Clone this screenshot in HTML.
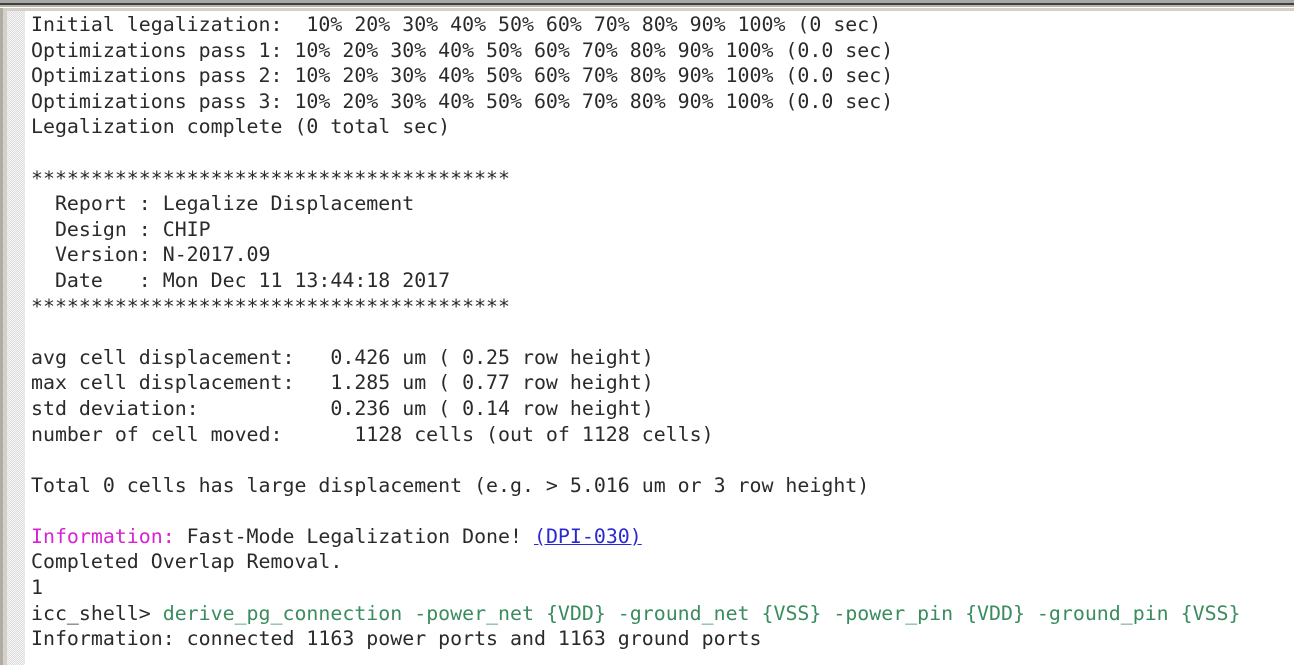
<!DOCTYPE html>
<html><head><meta charset="utf-8"><style>
html,body{margin:0;padding:0;width:1294px;height:665px;overflow:hidden;background:#fff;}
.top{position:absolute;left:0;top:0;width:1294px;height:3px;background:#a8a8a4;}
.top2{position:absolute;left:0;top:3px;width:1294px;height:2px;background:#404040;}
.top3{position:absolute;left:0;top:5px;width:1294px;height:2px;background:#b8b4ac;}
.top4{position:absolute;left:0;top:7px;width:1294px;height:1px;background:#fff;}
.top5{position:absolute;left:0;top:8px;width:1294px;height:3px;background:#d4d0c8;}
.left{position:absolute;left:0;top:8px;width:3px;height:657px;background:#b0aca4;}
.left2{position:absolute;left:3px;top:11px;width:4px;height:654px;background:#d4d0c8;}
.strip{position:absolute;left:7px;top:11px;width:18px;height:654px;
background-color:#f0f0f0;background-image:repeating-conic-gradient(#dcdcdc 0 25%,#f6f6f6 0 50%);background-size:2px 2px;}
pre{position:absolute;left:31px;top:12px;margin:0;font-family:"DejaVu Sans Mono","Liberation Mono",monospace;font-size:19.9px;line-height:25.6px;color:#2a2a2a;}
.m{color:#d424d4}.g{color:#3a8c5e}.b{color:#2a2ad0;text-decoration:underline}
</style></head><body>
<div class="top"></div><div class="top2"></div><div class="top3"></div><div class="top4"></div><div class="top5"></div>
<div class="left"></div><div class="left2"></div><div class="strip"></div>
<pre>Initial legalization:  10% 20% 30% 40% 50% 60% 70% 80% 90% 100% (0 sec)
Optimizations pass 1: 10% 20% 30% 40% 50% 60% 70% 80% 90% 100% (0.0 sec)
Optimizations pass 2: 10% 20% 30% 40% 50% 60% 70% 80% 90% 100% (0.0 sec)
Optimizations pass 3: 10% 20% 30% 40% 50% 60% 70% 80% 90% 100% (0.0 sec)
Legalization complete (0 total sec)

****************************************
  Report : Legalize Displacement
  Design : CHIP
  Version: N-2017.09
  Date   : Mon Dec 11 13:44:18 2017
****************************************

avg cell displacement:   0.426 um ( 0.25 row height)
max cell displacement:   1.285 um ( 0.77 row height)
std deviation:           0.236 um ( 0.14 row height)
number of cell moved:      1128 cells (out of 1128 cells)

Total 0 cells has large displacement (e.g. &gt; 5.016 um or 3 row height)

<span class="m">Information:</span> Fast-Mode Legalization Done! <span class="b">(DPI-030)</span>
Completed Overlap Removal.
1
icc_shell&gt; <span class="g">derive_pg_connection -power_net {VDD} -ground_net {VSS} -power_pin {VDD} -ground_pin {VSS}</span>
Information: connected 1163 power ports and 1163 ground ports</pre>
</body></html>
